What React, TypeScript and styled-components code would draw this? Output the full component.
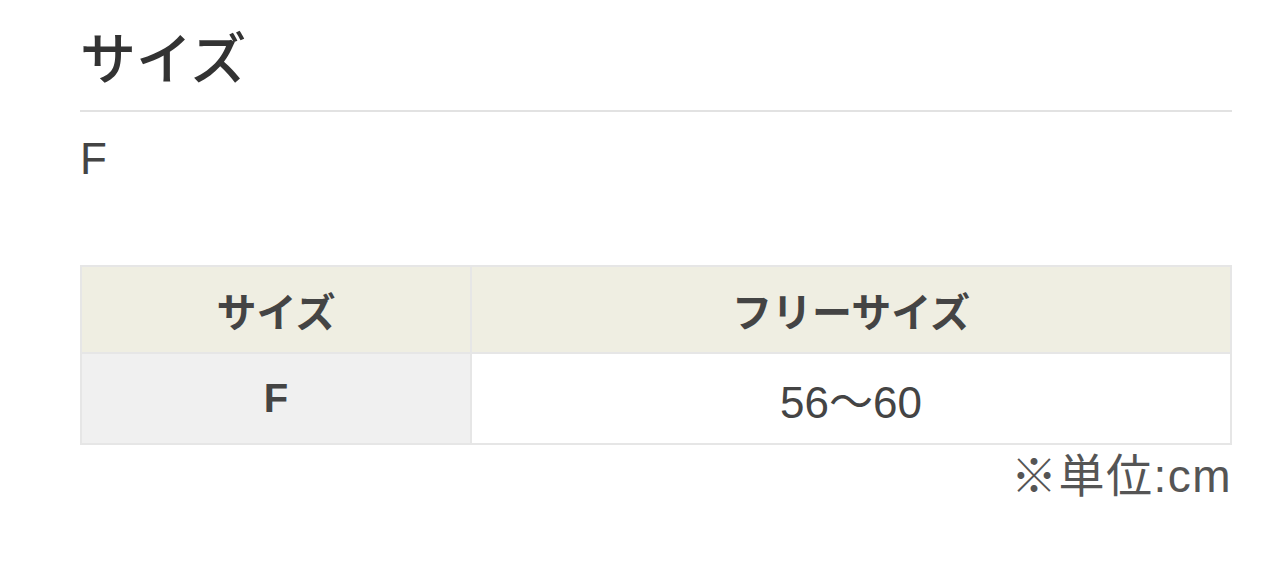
import React from "react";
import styled, { createGlobalStyle } from "styled-components";

const GlobalStyle = createGlobalStyle`
  body {
    margin: 0;
    background: #fff;
    font-family: "Liberation Sans", "Noto Sans CJK JP", sans-serif;
    color: #444;
  }
`;

const Section = styled.section`
  width: 1152px;
  padding: 22px 0 0 80px;
`;

const Title = styled.h2`
  margin: 0;
  padding-bottom: 12px;
  font-size: 56px;
  line-height: 76px;
  font-weight: 500;
  color: #333;
  border-bottom: 2px solid #e2e2e2;
`;

const Value = styled.p`
  margin: 0;
  padding-top: 22px;
  font-size: 44px;
  line-height: 50px;
  color: #444;
`;

const Table = styled.table`
  width: 100%;
  margin-top: 81px;
  border-collapse: collapse;
  table-layout: fixed;
`;

const Cell = styled.td<{ $bg: string; $bold?: boolean; $size: number; $h: number }>`
  height: ${(p) => p.$h}px;
  padding: 0;
  text-align: center;
  vertical-align: middle;
  background: ${(p) => p.$bg};
  border: 2px solid #e6e6e6;
  font-size: ${(p) => p.$size}px;
  font-weight: ${(p) => (p.$bold ? 700 : 400)};
  color: #444;
`;

const Note = styled.p`
  margin: 6px 0 0;
  text-align: right;
  font-size: 46px;
  line-height: 50px;
  letter-spacing: 1.5px;
  color: #555;
`;

const sizes = [{ size: "F", value: "56～60" }];

const App: React.FC = () => {
  return (
    <>
      <GlobalStyle />
      <Section>
        <Title>サイズ</Title>
        <Value>F</Value>
        <Table>
          <colgroup>
            <col style={{ width: "390px" }} />
            <col />
          </colgroup>
          <tbody>
            <tr>
              <Cell as="th" $bg="#efeee2" $bold $size={40} $h={85}>
                サイズ
              </Cell>
              <Cell as="th" $bg="#efeee2" $bold $size={40} $h={85}>
                フリーサイズ
              </Cell>
            </tr>
            {sizes.map((row) => (
              <tr key={row.size}>
                <Cell $bg="#f0f0f0" $bold $size={40} $h={89}>
                  {row.size}
                </Cell>
                <Cell $bg="#fff" $size={44} $h={89}>
                  {row.value}
                </Cell>
              </tr>
            ))}
          </tbody>
        </Table>
        <Note>※単位:cm</Note>
      </Section>
    </>
  );
};

export default App;
